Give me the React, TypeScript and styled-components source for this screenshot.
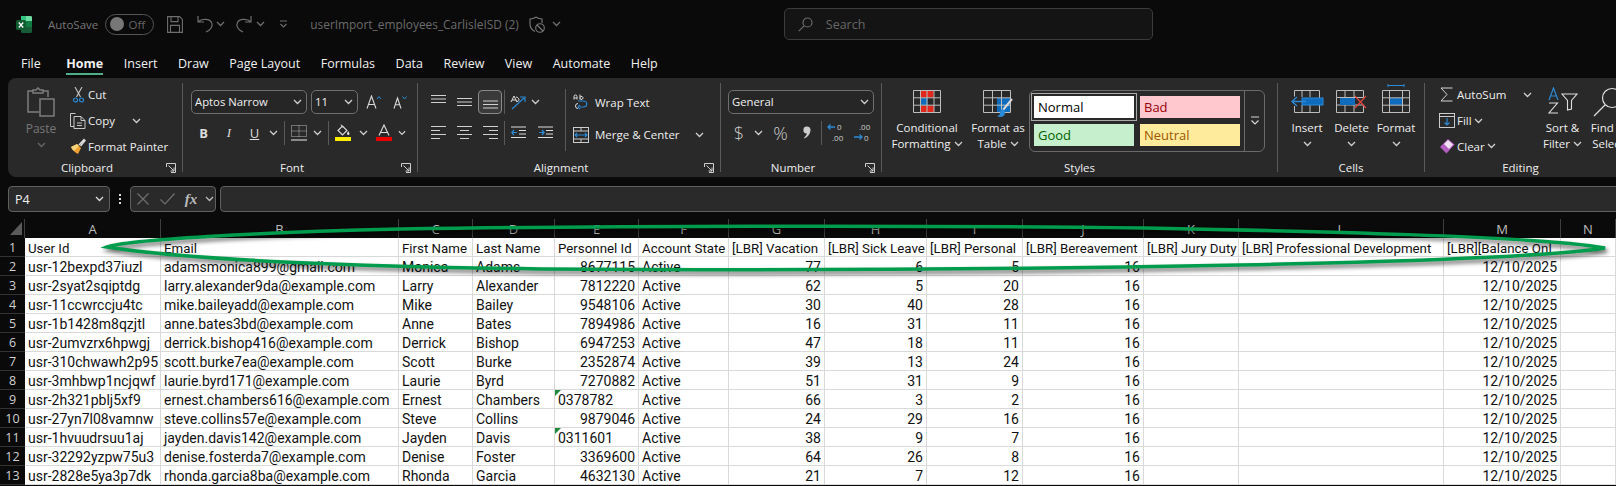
import React from "react";
import styled, { createGlobalStyle } from "styled-components";

const Global = createGlobalStyle`
  html, body { margin: 0; padding: 0; background: #0a0a0a; overflow: hidden; }
  #root { width: 1616px; height: 486px; overflow: hidden; }
`;

const Page = styled.div`
  position: relative;
  width: 1616px;
  height: 486px;
  overflow: hidden;
  background: #0a0a0a;
  font-family: "Open Sans", "Noto Sans", sans-serif;
  color: #e8e8e8;
`;

const TitleBar = styled.header`
  display: flex;
  align-items: center;
  height: 48px;
  padding-left: 16px;
`;
const TitleItem = styled.div<{ $w?: number; $ml?: number; $c?: string; $fs?: number }>`
  display: flex;
  align-items: center;
  justify-content: center;
  flex: none;
  ${(p) => (p.$w ? `width:${p.$w}px;` : "")}
  margin-left: ${(p) => p.$ml ?? 0}px;
  font-size: ${(p) => p.$fs ?? 11.5}px;
  white-space: nowrap;
  color: ${(p) => p.$c ?? "#777"};
`;
const Toggle = styled.div`
  display: flex;
  align-items: center;
  justify-content: space-between;
  box-sizing: border-box;
  width: 49px;
  height: 21px;
  margin-left: 7px;
  padding: 0 8px 0 4px;
  border: 1px solid #555;
  border-radius: 11px;
  color: #666;
  font-size: 11.5px;
  flex: none;
`;
const Knob = styled.span`
  width: 14px;
  height: 14px;
  border-radius: 50%;
  background: #777;
`;
const SearchBox = styled.div`
  display: flex;
  align-items: center;
  box-sizing: border-box;
  width: 369px;
  height: 32px;
  padding-left: 13px;
  gap: 13px;
  background: #141414;
  border: 1px solid #3c3c3c;
  border-radius: 5px;
  color: #666;
  font-size: 12.5px;
  flex: none;
`;

const Tabs = styled.nav`
  display: flex;
  align-items: flex-end;
  gap: 20.5px;
  box-sizing: border-box;
  height: 30px;
  padding-left: 21px;
`;
const Tab = styled.div<{ $active?: boolean; $ml?: number }>`
  position: relative;
  font-size: 12.5px;
  font-weight: ${(p) => (p.$active ? 700 : 400)};
  color: #f0f0f0;
  line-height: 28px;
  white-space: nowrap;
  margin-left: ${(p) => p.$ml ?? 0}px;
  ${(p) =>
    p.$active
      ? `&::after{content:"";position:absolute;left:0;right:0;bottom:3px;height:2px;background:#4fae8a;}`
      : ""}
`;

const Ribbon = styled.section`
  display: flex;
  height: 99px;
  margin-left: 8px;
  background: #292929;
  border-radius: 8px 0 0 8px;
  overflow: hidden;
`;
const Group = styled.div<{ $w: number }>`
  flex: none;
  width: ${(p) => p.$w}px;
  display: grid;
  grid-template-rows: 81px 18px;
`;
const GroupSep = styled.div`
  flex: none;
  width: 1px;
  margin: 5px 0;
  background: #5a5a5a;
`;
const GroupBody = styled.div<{ $pl?: number }>`
  display: flex;
  padding-left: ${(p) => p.$pl ?? 0}px;
  min-width: 0;
`;
const GroupFooter = styled.div`
  display: flex;
  align-items: center;
  font-size: 11.5px;
  color: #eee;
  line-height: 18px;
`;
const GroupName = styled.span`
  flex: 1;
  text-align: center;
  white-space: nowrap;
`;
const Launcher = styled.span`
  display: flex;
  flex: none;
  width: 16px;
`;

const PasteCol = styled.div`
  width: 54px;
  flex: none;
  display: flex;
  flex-direction: column;
  align-items: center;
  padding-top: 9px;
  color: #777;
  font-size: 12px;
  line-height: 16px;
`;
const PasteIconBox = styled.div`
  height: 34px;
`;
const PasteChevron = styled.span`
  display: flex;
  align-items: center;
  height: 16px;
`;
const SmallStack = styled.div<{ $w?: number }>`
  display: flex;
  flex-direction: column;
  padding-top: 4px;
  flex: none;
  ${(p) => (p.$w ? `width:${p.$w}px;` : "")}
`;
const SmallItem = styled.div`
  display: flex;
  align-items: center;
  height: 26px;
  font-size: 11.5px;
  color: #eee;
  white-space: nowrap;
`;
const ItemIcon = styled.span<{ $w: number }>`
  display: flex;
  flex: none;
  justify-content: center;
  align-items: center;
  width: ${(p) => p.$w}px;
`;
const RowStack = styled.div<{ $w?: number; $pt?: number; $gap?: number }>`
  display: flex;
  flex-direction: column;
  padding-top: ${(p) => p.$pt ?? 12}px;
  gap: ${(p) => p.$gap ?? 8}px;
  flex: none;
  ${(p) => (p.$w ? `width:${p.$w}px;` : "")}
`;
const ToolRow = styled.div`
  display: flex;
  align-items: center;
  height: 23px;
`;
const TextRow = styled(ToolRow)`
  font-size: 11.5px;
  color: #eee;
`;
const Slot = styled.span<{ $w: number; $ml?: number }>`
  display: flex;
  flex: none;
  align-items: center;
  justify-content: center;
  width: ${(p) => p.$w}px;
  margin-left: ${(p) => p.$ml ?? 0}px;
`;
const FontMark = styled(Slot)<{ $variant: "b" | "i" | "u" }>`
  color: #ddd;
  font-size: 13px;
  ${(p) => (p.$variant === "b" ? "font-weight:700;" : "")}
  ${(p) => (p.$variant === "i" ? 'font-style:italic;font-family:"Liberation Serif",serif;' : "")}
  ${(p) => (p.$variant === "u" ? "text-decoration:underline;" : "")}
`;
const NumMark = styled(Slot)`
  color: #ccc;
  font-size: 18px;
  font-weight: 300;
`;
const Selected = styled.span`
  display: flex;
  align-items: center;
  justify-content: center;
  box-sizing: border-box;
  width: 24px;
  height: 24px;
  border: 1px solid #8a8a8a;
  border-radius: 4px;
  background: #3a3a3a;
`;
const VRule = styled.span`
  display: block;
  width: 1px;
  height: 24px;
  background: #5a5a5a;
`;
const TallRule = styled.div`
  flex: none;
  width: 1px;
  height: 62px;
  margin-top: 11px;
  background: #5a5a5a;
`;
const Combo = styled.div<{ $w: number; $ml?: number }>`
  display: flex;
  align-items: center;
  justify-content: space-between;
  box-sizing: border-box;
  flex: none;
  width: ${(p) => p.$w}px;
  height: 24px;
  margin-left: ${(p) => p.$ml ?? 0}px;
  padding: 0 4px 0 3px;
  border: 1px solid #6f6f6f;
  border-radius: 5px;
  background: #262626;
  font-size: 11.3px;
  color: #f0f0f0;
`;
const BigButton = styled.div<{ $w: number; $ml?: number; $pt?: number }>`
  flex: none;
  width: ${(p) => p.$w}px;
  margin-left: ${(p) => p.$ml ?? 0}px;
  display: flex;
  flex-direction: column;
  align-items: center;
  padding-top: ${(p) => p.$pt ?? 12}px;
  font-size: 11.5px;
  line-height: 16px;
  color: #eee;
  white-space: nowrap;
  text-align: center;
`;
const BigIcon = styled.div<{ $h?: number; $mt?: number }>`
  height: ${(p) => p.$h ?? 30}px;
  margin-top: ${(p) => p.$mt ?? 0}px;
  display: flex;
  align-items: flex-start;
`;
const BigLine = styled.div`
  display: flex;
  align-items: center;
  justify-content: center;
  gap: 3px;
  height: 16px;
`;
const Gallery = styled.div`
  flex: none;
  display: flex;
  box-sizing: border-box;
  width: 236px;
  height: 62px;
  margin-top: 12px;
  border: 1px solid #6a6a6a;
  border-radius: 6px;
`;
const Swatches = styled.div`
  display: grid;
  grid-template-columns: 100px 100px;
  grid-template-rows: 22px 22px;
  gap: 6px;
  padding: 5px 0 0 4px;
  width: 214px;
  box-sizing: border-box;
`;
const Swatch = styled.div<{ $bg: string; $fg: string; $on?: boolean }>`
  background: ${(p) => p.$bg};
  color: ${(p) => p.$fg};
  font-size: 13px;
  line-height: 22px;
  padding-left: 4px;
  ${(p) => (p.$on ? "outline: 1px solid #aaa; outline-offset: 2px;" : "")}
`;
const GalleryMore = styled.div`
  flex: 1;
  display: flex;
  align-items: center;
  justify-content: center;
  border-left: 1px solid #6a6a6a;
`;

const FormulaRow = styled.section`
  display: flex;
  align-items: stretch;
  height: 26px;
  margin-top: 9px;
  padding-left: 8px;
`;
const FBox = styled.div<{ $w: number; $ml?: number }>`
  display: flex;
  align-items: center;
  box-sizing: border-box;
  flex: none;
  width: ${(p) => p.$w}px;
  margin-left: ${(p) => p.$ml ?? 0}px;
  background: #2a2a2a;
  border: 1px solid #5f5f5f;
  border-radius: 4px;
  font-size: 12.5px;
  color: #eee;
`;
const NameText = styled.span`
  flex: 1;
  padding-left: 6px;
`;
const Dots = styled.div`
  flex: none;
  width: 20px;
  display: flex;
  flex-direction: column;
  align-items: center;
  justify-content: center;
  gap: 2px;
`;
const Dot = styled.i`
  width: 2px;
  height: 2px;
  background: #ddd;
`;
const FxText = styled.span`
  font-family: "Liberation Serif", serif;
  font-style: italic;
  font-weight: 700;
  font-size: 15px;
  color: #bbb;
`;

const COLS = "25px 136px 238px 74px 82px 84px 90px 96px 102px 96px 121px 95px 205px 117px 55px";

const Sheet = styled.div`
  display: grid;
  grid-template-columns: ${COLS};
  grid-auto-rows: 19px;
  margin-top: 7px;
  font-family: "Roboto", "Liberation Sans", sans-serif;
`;
const ColHead = styled.div`
  box-sizing: border-box;
  background: #0a0a0a;
  border-right: 1px solid #3f3f3f;
  color: #bdbdbd;
  text-align: center;
  font-size: 13px;
  line-height: 20px;
  font-family: "Open Sans", sans-serif;
`;
const Corner = styled(ColHead)`
  display: flex;
  align-items: flex-end;
  justify-content: flex-end;
  padding: 0 2px 3px 0;
`;
const RowHead = styled.div`
  box-sizing: border-box;
  background: #0a0a0a;
  border-bottom: 1px solid #333;
  color: #d0d0d0;
  text-align: center;
  font-size: 12.5px;
  line-height: 20px;
  font-family: "Open Sans", sans-serif;
`;
const Cell = styled.div<{ $right?: boolean; $flag?: boolean }>`
  position: relative;
  box-sizing: border-box;
  background: #fff;
  border-right: 1px solid #d9d9d9;
  border-bottom: 1px solid #d9d9d9;
  color: #111;
  font-size: 14px;
  line-height: 21px;
  padding: 0 3px;
  white-space: nowrap;
  overflow: hidden;
  text-align: ${(p) => (p.$right ? "right" : "left")};
  ${(p) =>
    p.$flag
      ? `&::before{content:"";position:absolute;left:0;top:0;border-top:6px solid #1e8a3c;border-right:6px solid transparent;}`
      : ""}
`;
const HeaderCell = styled(Cell)`
  font-size: 13.3px;
`;
const Annotation = styled.svg`
  position: absolute;
  left: 0;
  top: 0;
  pointer-events: none;
  filter: drop-shadow(2px 3px 2px rgba(0, 0, 0, 0.6));
`;
const DecSvg = styled.svg`
  overflow: visible;
`;

const G = "#c8c8c8";
const B = "#2b8ad6";
const Blue = "#0f6cbd";

const Chev = ({ c = "#cfcfcf" }: { c?: string }) => (
  <svg width="9" height="6" viewBox="0 0 9 6" fill="none">
    <path d="M1 1l3.500 3.500L8 1" stroke={c} strokeWidth="1.300" />
  </svg>
);
const Launch = () => (
  <svg width="10" height="10" viewBox="0 0 10 10" fill="none" stroke="#cfcfcf">
    <path d="M.5 4V.5H9.500V9.500H5M2.500 2.500L8 8M8 4.500V8H4.500" />
  </svg>
);
const ExcelLogo = () => (
  <svg width="16" height="17" viewBox="0 0 16 17">
    <path d="M5 0h9.500a1.500 1.500 0 0 1 1.500 1.500V5H5z" fill="#33c481" />
    <path d="M5 5h11v6H5z" fill="#107c41" />
    <path d="M5 11h11v4.500a1.500 1.500 0 0 1-1.500 1.500H6.500A1.500 1.500 0 0 1 5 15.500z" fill="#185c37" />
    <path d="M10 0h4.500a1.500 1.500 0 0 1 1.500 1.500V5h-6z" fill="#6fdca4" />
    <rect x="0" y="4" width="10" height="10" rx="1.500" fill="#0e5c30" />
    <path d="M2.800 6.500l4.400 5M7.200 6.500l-4.400 5" stroke="#fff" strokeWidth="1.300" />
  </svg>
);
const SaveIco = () => (
  <svg width="16" height="17" viewBox="0 0 16 17" fill="none" stroke="#6e6e6e" strokeWidth="1.100">
    <path d="M.6.6h12l2.800 2.800v13H.6zM4 .6v5h7v-5M3.500 16.400v-7h9v7" />
  </svg>
);
const UndoIco = () => (
  <svg width="16" height="18" viewBox="0 0 16 18" fill="none" stroke="#6e6e6e" strokeWidth="1.200">
    <path d="M1 1v6h6M1 7c4-4 13-3.500 14 2 .5 3-2 6-6 8" />
  </svg>
);
const RedoIco = () => (
  <svg width="16" height="18" viewBox="0 0 16 18" fill="none" stroke="#6e6e6e" strokeWidth="1.200">
    <path d="M15 1v6H9M15 7C11 3 2 3.500 1 9c-.5 3 2 6 6 8" />
  </svg>
);
const CustomizeIco = () => (
  <svg width="9" height="9" viewBox="0 0 9 9" fill="none" stroke="#6e6e6e" strokeWidth="1.100">
    <path d="M1 1h7M1.500 4l3 3 3-3" />
  </svg>
);
const ShieldIco = () => (
  <svg width="16" height="17" viewBox="0 0 16 17" fill="none" stroke="#7a7a7a" strokeWidth="1.100">
    <path d="M7 1c2 1.500 4 2 6 2v4M7 1C5 2.500 3 3 1 3v5c0 3 2 6 5 7.500" />
    <circle cx="11" cy="12" r="4.300" />
    <path d="M8 9l6 6" />
  </svg>
);
const SearchIco = () => (
  <svg width="15" height="15" viewBox="0 0 15 15" fill="none" stroke="#6a6a6a" strokeWidth="1.200">
    <circle cx="9.500" cy="5.500" r="4.500" />
    <path d="M6.300 8.700L.8 14.200" />
  </svg>
);
const PasteIco = () => (
  <svg width="28" height="30" viewBox="0 0 28 30" fill="none" stroke="#7d7d7d" strokeWidth="1.500">
    <path d="M12 25H1V4h5M16 4h5v6" />
    <path d="M6 6V3h3l2-2 2 2h3v3z" />
    <rect x="13" y="12" width="14" height="17" />
  </svg>
);
const CutIco = () => (
  <svg width="11" height="16" viewBox="0 0 11 16" fill="none">
    <path d="M2 0l5.500 10M9 0L3.500 10" stroke={G} strokeWidth="1.100" />
    <circle cx="2.500" cy="13" r="2" stroke={B} strokeWidth="1.200" />
    <circle cx="8.500" cy="13" r="2" stroke={B} strokeWidth="1.200" />
  </svg>
);
const CopyIco = () => (
  <svg width="16" height="16" viewBox="0 0 16 16" fill="none" stroke={G} strokeWidth="1">
    <path d="M4 13.500H.5V.5h5" />
    <path d="M4 3.500h7l4 4v8H4zM11 3.500v4h4M7 10h5M7 12.500h5" />
  </svg>
);
const PainterIco = () => (
  <svg width="16" height="16" viewBox="0 0 16 16" fill="none">
    <path d="M1 9l6-3 4 4-3 6C6 15 2 12 1 9z" fill="#f0a030" />
    <path d="M1 9l6-3 2 2-5 5C3 12 2 11 1 9z" fill="#f3d27a" />
    <path d="M9 7l5-5.500 1 1L10.500 8" stroke="#ddd" strokeWidth="1.500" />
  </svg>
);
const Bars = ({ d }: { d: string }) => (
  <svg width="15" height="14" viewBox="0 0 15 14" fill="none" stroke="#d0d0d0" strokeWidth="1">
    <path d={d} />
  </svg>
);
const GrowIco = ({ up }: { up: boolean }) => (
  <svg width={up ? 16 : 14} height="14" viewBox={up ? "0 0 16 14" : "0 0 14 14"} fill="none">
    <path d={up ? "M1 13.500L5.500 1 10 13.500M2.500 9.500h6" : "M1 13.500L4.500 3 8 13.500M2 9.800h5"} stroke="#d8d8d8" strokeWidth="1.100" />
    <path d={up ? "M11 4l2-2.500L15 4" : "M9.500 1.500l2 2.500 2-2.500"} stroke={B} strokeWidth="1" />
  </svg>
);
const BordersIco = () => (
  <svg width="16" height="16" viewBox="0 0 16 16" fill="none" stroke="#bbb" strokeDasharray="1 1">
    <path d="M.5 .5h15v11H.5zM8 .5v11M.5 6h15" />
    <path d="M0 15h16" strokeDasharray="none" stroke="#eee" />
  </svg>
);
const FillIco = () => (
  <svg width="16" height="17" viewBox="0 0 16 17">
    <path d="M3 6.500L7.500 2l4.500 4.500-4.500 4.500z" fill="none" stroke="#ddd" strokeWidth="1.100" />
    <path d="M6 0.500l2 3" stroke="#ddd" />
    <path d="M13 7c.8 1 1.500 2 1.500 2.800 0 .8-.6 1.200-1.300 1.200s-1.200-.5-1.200-1.200C12 9 12.500 8 13 7z" fill="#ddd" />
    <rect y="13" width="16" height="4" fill="#ffee00" />
  </svg>
);
const FontColorIco = () => (
  <svg width="16" height="17" viewBox="0 0 16 17">
    <path d="M3 11.500L8 1l5 10.500M4.500 8.500h7" fill="none" stroke="#ddd" strokeWidth="1.100" />
    <rect y="13" width="16" height="4" fill="#ee0000" />
  </svg>
);
const OrientIco = () => (
  <svg width="17" height="16" viewBox="0 0 17 16" fill="none">
    <path d="M1 8l3-6 3 6M2 6h4" stroke="#ddd" />
    <path d="M6 3c2 0 3 2 3 3s-2 2-3 1" stroke="#ddd" />
    <path d="M2 15L14 4M10 3h5v5" stroke={B} strokeWidth="1.200" />
  </svg>
);
const IndentIco = ({ out }: { out: boolean }) => (
  <svg width="15" height="13" viewBox="0 0 15 13" fill="none">
    <path d="M0 1h15M8 4.500h7M8 8h7M0 11.500h15" stroke="#ddd" />
    <path d={out ? "M6 6.500H1M3 4L.8 6.500 3 9" : "M1 6.500h5M4 4l2.200 2.500L4 9"} stroke={B} strokeWidth="1.200" />
  </svg>
);
const WrapIco = () => (
  <svg width="15" height="17" viewBox="0 0 15 17" fill="none" stroke="#ddd">
    <path d="M1 5.500L1 2.500a1.500 1.500 0 0 1 3 0v3M1 4h3M7 .5v5M7 3.500a1.500 1.500 0 1 1 0 .8" />
    <path d="M5 9.500a2 2 0 1 0 0 5" />
    <path d="M8 16h3c5 0 5-6 0-6H6M8 14l-2 2M8 18l-2-2" stroke={B} strokeWidth="1.200" transform="translate(-1 -3)" />
  </svg>
);
const MergeIco = () => (
  <svg width="16" height="16" viewBox="0 0 16 16" fill="none">
    <rect x=".5" y=".5" width="15" height="15" stroke="#ccc" />
    <path d="M.5 4h15M.5 12h15M8 .5v3.500M8 12v3.500" stroke="#ccc" />
    <path d="M2 8h12M4 6l-2 2 2 2M12 6l2 2-2 2" stroke={B} strokeWidth="1.100" />
  </svg>
);
const CommaIco = () => (
  <svg width="8" height="13" viewBox="0 0 8 13">
    <path d="M4 .5a3.500 3.500 0 0 1 3.500 3.500c0 3.500-2.500 7-6 8.500l-.5-.8c1.500-1 2.500-2.500 2.800-4.200A3.500 3.500 0 0 1 4 .5z" fill="#ccc" />
  </svg>
);
const DecIco = ({ inc }: { inc: boolean }) => (
  <DecSvg width="18" height="21" viewBox="0 0 18 21">
    <path d={inc ? "M8 5H1M3.500 2.500L1 5 3.500 7.500" : "M1 15h8M6.500 12.500L9 15 6.500 17.500"} fill="none" stroke={B} strokeWidth="1.300" />
    <text x={inc ? 10 : 6} y="8" fontSize="8" fill="#ccc" fontFamily="Open Sans, sans-serif">{inc ? "0" : ".00"}</text>
    <text x={inc ? 5 : 11} y="19" fontSize="8" fill="#ccc" fontFamily="Open Sans, sans-serif">{inc ? ".00" : "0"}</text>
  </DecSvg>
);
const Grid = ({ children }: { children?: React.ReactNode }) => (
  <svg width="28" height="23" viewBox="0 0 28 23" fill="none">
    {children}
    <path d="M.5 .5h27v22H.5zM.5 7.800h27M.5 15.200h27M7.500 .5v22M14 .5v22M21 .5v22" stroke="#bdbdbd" />
  </svg>
);
const CondIco = () => (
  <Grid>
    <rect x="7.500" y="1" width="13" height="6.500" fill="#e0281c" />
    <rect x="7.500" y="8" width="7" height="7" fill={Blue} />
    <rect x="7.500" y="15.500" width="13.500" height="6.500" fill="#e0281c" />
  </Grid>
);
const TableIco = () => (
  <svg width="31" height="28" viewBox="0 0 31 28" fill="none">
    <rect x="14" y="8" width="14" height="14" fill={Blue} />
    <path d="M.5 .5h27v22H.5zM.5 7.800h27M.5 15.200h27M9.500 .5v22M18.500 .5v22" stroke="#bdbdbd" />
    <path d="M29 9L20 20" stroke="#d8d8d8" strokeWidth="2" />
    <path d="M20 19c-2 0-3 2-3 4s-2 3-3 3c3 2 8 1 8-3 0-2-1-3-2-4z" fill={B} />
  </svg>
);
const MoreIco = () => (
  <svg width="10" height="10" viewBox="0 0 10 10" fill="none" stroke="#d5d5d5" strokeWidth="1.200">
    <path d="M1 1h8M1.500 4.500L5 8l3.500-3.500" />
  </svg>
);
const InsertIco = () => (
  <svg width="33" height="23" viewBox="0 0 33 23" fill="none">
    <path d="M3.500 .5h25v22h-25M3.500 .5v6M3.500 16v6.500M11 .5v6.500M19 .5v6.500M11 15v8M19 15v8" stroke="#bdbdbd" />
    <rect x="11" y="8" width="21" height="7" fill={Blue} stroke={B} />
    <path d="M15 11.500H2M6 7l-5 4.500L6 16" stroke={B} strokeWidth="1.300" />
  </svg>
);
const DeleteIco = () => (
  <svg width="31" height="23" viewBox="0 0 31 23" fill="none">
    <path d="M.5 .5h27v7h-27zM.5 15h27v7.500H.5zM.5 7.800V15M9 .5v7M18 .5v7M9 15v7.500M18 15v7.500" stroke="#bdbdbd" />
    <rect x="4" y="8" width="15" height="7" fill={Blue} />
    <path d="M19 6l11 12M30 6L19 18" stroke="#e0443c" strokeWidth="1.200" />
  </svg>
);
const FormatIco = () => (
  <svg width="28" height="29" viewBox="0 0 28 29" fill="none">
    <path d="M6 1.500h16M6 0v3M22 0v3" stroke={B} />
    <g transform="translate(0 6)">
      <rect x="7.500" y="8" width="13" height="7" fill={Blue} />
      <path d="M.5 .5h27v22H.5zM.5 7.800h27M.5 15.200h27M7.500 .5v22M20.500 .5v22" stroke="#bdbdbd" />
    </g>
  </svg>
);
const FillDownIco = () => (
  <svg width="16" height="15" viewBox="0 0 16 15" fill="none">
    <rect x=".5" y=".5" width="15" height="14" stroke="#ccc" />
    <path d="M.5 3.500h15" stroke="#ccc" />
    <path d="M8 5v7M5.500 9.500L8 12l2.500-2.500" stroke={B} strokeWidth="1.200" />
  </svg>
);
const SigmaIco = () => (
  <svg width="13" height="15" viewBox="0 0 13 15" fill="none" stroke="#d5d5d5">
    <path d="M12.500 1H1l6 6.500L1 14h11.500" />
  </svg>
);
const EraserIco = () => (
  <svg width="16" height="16" viewBox="0 0 16 16">
    <path d="M1 9l8-8 6.500 5.500-8 9z" fill="#b45fc0" />
    <path d="M5 6l4-4 5 4.500-4 4.500z" fill="#efe0f2" />
  </svg>
);
const SortIco = () => (
  <svg width="30" height="27" viewBox="0 0 30 27" fill="none">
    <path d="M1 13L5.500 1 10 13M2.500 9h6" stroke={B} strokeWidth="1.200" />
    <path d="M1 16h8.500L1 26h9" stroke="#ddd" strokeWidth="1.100" />
    <path d="M14 7h15l-5.500 6.500V22l-4 1v-9.500z" stroke="#ddd" strokeWidth="1.100" />
  </svg>
);
const FindIco = () => (
  <svg width="30" height="30" viewBox="0 0 30 30" fill="none" stroke="#ddd" strokeWidth="1.200">
    <circle cx="19" cy="11" r="9.500" />
    <path d="M12 18L1 29" />
  </svg>
);
const XIco = () => (
  <svg width="12" height="12" viewBox="0 0 12 12" fill="none" stroke="#6f6f6f" strokeWidth="1.200">
    <path d="M.5 .5l11 11M11.500 .5l-11 11" />
  </svg>
);
const CheckIco = () => (
  <svg width="15" height="12" viewBox="0 0 15 12" fill="none" stroke="#6f6f6f" strokeWidth="1.200">
    <path d="M.5 6.500L5 11 14.500 .5" />
  </svg>
);

type Row = [string, string, string, string, string, string, string, string];
const ROWS: Row[] = [
  ["usr-12bexpd37iuzl", "adamsmonica899@gmail.com", "Monica", "Adams", "8677115", "77", "6", "5"],
  ["usr-2syat2sqiptdg", "larry.alexander9da@example.com", "Larry", "Alexander", "7812220", "62", "5", "20"],
  ["usr-11ccwrccju4tc", "mike.baileyadd@example.com", "Mike", "Bailey", "9548106", "30", "40", "28"],
  ["usr-1b1428m8qzjtl", "anne.bates3bd@example.com", "Anne", "Bates", "7894986", "16", "31", "11"],
  ["usr-2umvzrx6hpwgj", "derrick.bishop416@example.com", "Derrick", "Bishop", "6947253", "47", "18", "11"],
  ["usr-310chwawh2p95", "scott.burke7ea@example.com", "Scott", "Burke", "2352874", "39", "13", "24"],
  ["usr-3mhbwp1ncjqwf", "laurie.byrd171@example.com", "Laurie", "Byrd", "7270882", "51", "31", "9"],
  ["usr-2h321pblj5xf9", "ernest.chambers616@example.com", "Ernest", "Chambers", "0378782", "66", "3", "2"],
  ["usr-27yn7l08vamnw", "steve.collins57e@example.com", "Steve", "Collins", "9879046", "24", "29", "16"],
  ["usr-1hvuudrsuu1aj", "jayden.davis142@example.com", "Jayden", "Davis", "0311601", "38", "9", "7"],
  ["usr-32292yzpw75u3", "denise.fosterda7@example.com", "Denise", "Foster", "3369600", "64", "26", "8"],
  ["usr-2828e5ya3p7dk", "rhonda.garcia8ba@example.com", "Rhonda", "Garcia", "4632130", "21", "7", "12"],
];
const HEADERS = ["User Id", "Email", "First Name", "Last Name", "Personnel Id", "Account State", "[LBR] Vacation", "[LBR] Sick Leave", "[LBR] Personal", "[LBR] Bereavement", "[LBR] Jury Duty", "[LBR] Professional Development", "[LBR][Balance On]", ""];
const LETTERS = "ABCDEFGHIJKLMN".split("");

export default function App() {
  return (
    <Page>
      <Global />
      <TitleBar>
        <TitleItem $w={16}><ExcelLogo /></TitleItem>
        <TitleItem $ml={16}>AutoSave</TitleItem>
        <Toggle><Knob />Off</Toggle>
        <TitleItem $w={16} $ml={13}><SaveIco /></TitleItem>
        <TitleItem $w={16} $ml={14}><UndoIco /></TitleItem>
        <TitleItem $w={9} $ml={3}><Chev c="#6e6e6e" /></TitleItem>
        <TitleItem $w={16} $ml={11}><RedoIco /></TitleItem>
        <TitleItem $w={9} $ml={4}><Chev c="#6e6e6e" /></TitleItem>
        <TitleItem $w={9} $ml={14}><CustomizeIco /></TitleItem>
        <TitleItem $ml={22} $c="#6b6b6b" $fs={11.9}>userImport_employees_CarlisleISD (2)</TitleItem>
        <TitleItem $w={16} $ml={10}><ShieldIco /></TitleItem>
        <TitleItem $w={10} $ml={7}><Chev c="#6e6e6e" /></TitleItem>
        <TitleItem $ml={222}>
          <SearchBox><SearchIco />Search</SearchBox>
        </TitleItem>
      </TitleBar>
      <Tabs>
        <Tab>File</Tab>
        <Tab $active $ml={5}>Home</Tab>
        <Tab>Insert</Tab>
        <Tab>Draw</Tab>
        <Tab>Page Layout</Tab>
        <Tab>Formulas</Tab>
        <Tab>Data</Tab>
        <Tab>Review</Tab>
        <Tab>View</Tab>
        <Tab>Automate</Tab>
        <Tab>Help</Tab>
      </Tabs>
      <Ribbon>
        <Group $w={174}>
          <GroupBody $pl={6}>
            <PasteCol>
              <PasteIconBox><PasteIco /></PasteIconBox>
              <span>Paste</span>
              <PasteChevron><Chev c="#666" /></PasteChevron>
            </PasteCol>
            <SmallStack>
              <SmallItem><ItemIcon $w={20}><CutIco /></ItemIcon>Cut</SmallItem>
              <SmallItem><ItemIcon $w={20}><CopyIco /></ItemIcon>Copy<Slot $w={12} $ml={16}><Chev /></Slot></SmallItem>
              <SmallItem><ItemIcon $w={20}><PainterIco /></ItemIcon>Format Painter</SmallItem>
            </SmallStack>
          </GroupBody>
          <GroupFooter><GroupName>Clipboard</GroupName><Launcher><Launch /></Launcher></GroupFooter>
        </Group>
        <GroupSep />
        <Group $w={234}>
          <GroupBody $pl={8}>
            <RowStack>
              <ToolRow>
                <Combo $w={116}>Aptos Narrow<Chev /></Combo>
                <Combo $w={47} $ml={4}>11<Chev /></Combo>
                <Slot $w={16} $ml={8}><GrowIco up /></Slot>
                <Slot $w={14} $ml={11}><GrowIco up={false} /></Slot>
              </ToolRow>
              <ToolRow>
                <FontMark $w={25} $variant="b">B</FontMark>
                <FontMark $w={26} $variant="i">I</FontMark>
                <FontMark $w={25} $variant="u">U</FontMark>
                <Slot $w={12}><Chev /></Slot>
                <Slot $w={10}><VRule /></Slot>
                <Slot $w={19}><BordersIco /></Slot>
                <Slot $w={18}><Chev /></Slot>
                <Slot $w={4}><VRule /></Slot>
                <Slot $w={26}><FillIco /></Slot>
                <Slot $w={14}><Chev /></Slot>
                <Slot $w={28}><FontColorIco /></Slot>
                <Slot $w={8}><Chev /></Slot>
              </ToolRow>
            </RowStack>
          </GroupBody>
          <GroupFooter><GroupName>Font</GroupName><Launcher><Launch /></Launcher></GroupFooter>
        </Group>
        <GroupSep />
        <Group $w={302}>
          <GroupBody $pl={7}>
            <RowStack $w={140}>
              <ToolRow>
                <Slot $w={26}><Bars d="M0 .5h15M0 4h15M0 7.500h15" /></Slot>
                <Slot $w={26}><Bars d="M0 3.500h15M0 7h15M0 10.500h15" /></Slot>
                <Slot $w={26}><Selected><Bars d="M0 6h15M0 9.500h15M0 13h15" /></Selected></Slot>
                <Slot $w={2}><VRule /></Slot>
                <Slot $w={26}><OrientIco /></Slot>
                <Slot $w={9}><Chev /></Slot>
              </ToolRow>
              <ToolRow>
                <Slot $w={26}><Bars d="M0 .5h15M0 4.500h9M0 8.500h15M0 12.500h9" /></Slot>
                <Slot $w={26}><Bars d="M0 .5h15M3 4.500h9M0 8.500h15M3 12.500h9" /></Slot>
                <Slot $w={26}><Bars d="M0 .5h15M6 4.500h9M0 8.500h15M6 12.500h9" /></Slot>
                <Slot $w={2}><VRule /></Slot>
                <Slot $w={27}><IndentIco out /></Slot>
                <Slot $w={26}><IndentIco out={false} /></Slot>
              </ToolRow>
            </RowStack>
            <TallRule />
            <RowStack $pt={13} $gap={9}>
              <TextRow>
                <ItemIcon $w={29}><WrapIco /></ItemIcon>Wrap Text
              </TextRow>
              <TextRow>
                <ItemIcon $w={29}><MergeIco /></ItemIcon>Merge &amp; Center<Slot $w={12} $ml={14}><Chev /></Slot>
              </TextRow>
            </RowStack>
          </GroupBody>
          <GroupFooter><GroupName>Alignment</GroupName><Launcher><Launch /></Launcher></GroupFooter>
        </Group>
        <GroupSep />
        <Group $w={160}>
          <GroupBody $pl={7}>
            <RowStack>
              <ToolRow><Combo $w={146}>General<Chev /></Combo></ToolRow>
              <ToolRow>
                <NumMark $w={22}>$</NumMark>
                <Slot $w={16}><Chev /></Slot>
                <NumMark $w={29}>%</NumMark>
                <Slot $w={24}><CommaIco /></Slot>
                <Slot $w={4}><VRule /></Slot>
                <Slot $w={26}><DecIco inc /></Slot>
                <Slot $w={25}><DecIco inc={false} /></Slot>
              </ToolRow>
            </RowStack>
          </GroupBody>
          <GroupFooter><GroupName>Number</GroupName><Launcher><Launch /></Launcher></GroupFooter>
        </Group>
        <GroupSep />
        <Group $w={395}>
          <GroupBody $pl={9}>
            <BigButton $w={72}>
              <BigIcon><CondIco /></BigIcon>
              <BigLine>Conditional</BigLine>
              <BigLine>Formatting <Chev /></BigLine>
            </BigButton>
            <BigButton $w={62} $ml={4}>
              <BigIcon><TableIco /></BigIcon>
              <BigLine>Format as</BigLine>
              <BigLine>Table <Chev /></BigLine>
            </BigButton>
            <Gallery>
              <Swatches>
                <Swatch $bg="#fff" $fg="#000" $on>Normal</Swatch>
                <Swatch $bg="#ffc7ce" $fg="#9c0006">Bad</Swatch>
                <Swatch $bg="#c6efce" $fg="#006100">Good</Swatch>
                <Swatch $bg="#ffeb9c" $fg="#9c5700">Neutral</Swatch>
              </Swatches>
              <GalleryMore><MoreIco /></GalleryMore>
            </Gallery>
          </GroupBody>
          <GroupFooter><GroupName>Styles</GroupName></GroupFooter>
        </Group>
        <GroupSep />
        <Group $w={146}>
          <GroupBody $pl={7}>
            <BigButton $w={44}>
              <BigIcon><InsertIco /></BigIcon>
              <BigLine>Insert</BigLine>
              <BigLine><Chev /></BigLine>
            </BigButton>
            <BigButton $w={45}>
              <BigIcon><DeleteIco /></BigIcon>
              <BigLine>Delete</BigLine>
              <BigLine><Chev /></BigLine>
            </BigButton>
            <BigButton $w={44} $pt={6}>
              <BigIcon $h={36}><FormatIco /></BigIcon>
              <BigLine>Format</BigLine>
              <BigLine><Chev /></BigLine>
            </BigButton>
          </GroupBody>
          <GroupFooter><GroupName>Cells</GroupName></GroupFooter>
        </Group>
        <GroupSep />
        <Group $w={191}>
          <GroupBody $pl={11}>
            <SmallStack $w={99}>
              <SmallItem><ItemIcon $w={21}><SigmaIco /></ItemIcon>AutoSum<Slot $w={12} $ml={15}><Chev /></Slot></SmallItem>
              <SmallItem><ItemIcon $w={21}><FillDownIco /></ItemIcon>Fill<Slot $w={10} $ml={2}><Chev /></Slot></SmallItem>
              <SmallItem><ItemIcon $w={21}><EraserIco /></ItemIcon>Clear<Slot $w={10} $ml={2}><Chev /></Slot></SmallItem>
            </SmallStack>
            <BigButton $w={55}>
              <BigIcon $mt={-3} $h={33}><SortIco /></BigIcon>
              <BigLine>Sort &amp;</BigLine>
              <BigLine>Filter <Chev /></BigLine>
            </BigButton>
            <BigButton $w={36}>
              <BigIcon $mt={-3} $h={33}><FindIco /></BigIcon>
              <BigLine>Find &amp;</BigLine>
              <BigLine>Select</BigLine>
            </BigButton>
          </GroupBody>
          <GroupFooter><GroupName>Editing</GroupName></GroupFooter>
        </Group>
      </Ribbon>
      <FormulaRow>
        <FBox $w={102}>
          <NameText>P4</NameText>
          <Slot $w={20}><Chev c="#ddd" /></Slot>
        </FBox>
        <Dots><Dot /><Dot /><Dot /></Dots>
        <FBox $w={86}>
          <Slot $w={24}><XIco /></Slot>
          <Slot $w={24}><CheckIco /></Slot>
          <Slot $w={24}><FxText>fx</FxText></Slot>
          <Slot $w={12}><Chev c="#bbb" /></Slot>
        </FBox>
        <FBox $w={1500} $ml={4} />
      </FormulaRow>
      <Sheet>
        <Corner>
          <svg width="12" height="13" viewBox="0 0 12 13"><path d="M12 0v13H0z" fill="#5a5a5a" /></svg>
        </Corner>
        {LETTERS.map((l) => <ColHead key={l}>{l}</ColHead>)}
        <RowHead>1</RowHead>
        {HEADERS.map((h, i) => <HeaderCell key={i}>{h}</HeaderCell>)}
        {ROWS.map((r, i) => (
          <React.Fragment key={r[0]}>
            <RowHead>{i + 2}</RowHead>
            <Cell>{r[0]}</Cell>
            <Cell>{r[1]}</Cell>
            <Cell>{r[2]}</Cell>
            <Cell>{r[3]}</Cell>
            <Cell $right={!r[4].startsWith("0")} $flag={r[4].startsWith("0")}>{r[4]}</Cell>
            <Cell>Active</Cell>
            <Cell $right>{r[5]}</Cell>
            <Cell $right>{r[6]}</Cell>
            <Cell $right>{r[7]}</Cell>
            <Cell $right>16</Cell>
            <Cell />
            <Cell />
            <Cell $right>12/10/2025</Cell>
            <Cell />
          </React.Fragment>
        ))}
      </Sheet>
      <Annotation width="1616" height="486" viewBox="0 0 1616 486" fill="none">
        <path
          d="M107 247C125 240 260 232 400 229C600 226 900 225 1145 228C1300 231 1540 236 1605 248C1570 254 1450 261 1239 265C1000 270 700 270 540 269C400 267 200 262 107 247Z"
          stroke="#009c4d"
          strokeWidth="3.500"
        />
      </Annotation>
    </Page>
  );
}
